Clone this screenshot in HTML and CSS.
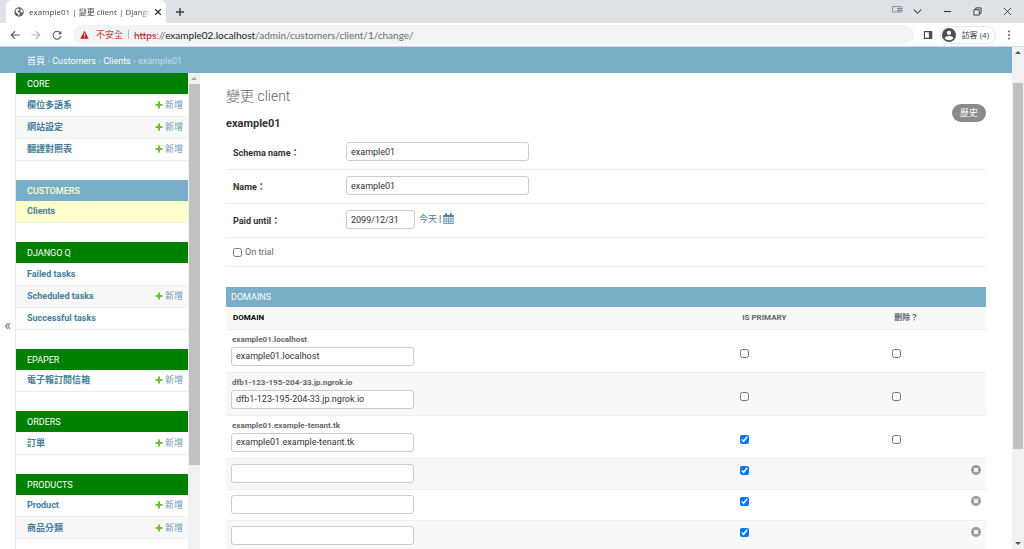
FILE: index.html
```
<!DOCTYPE html>
<html lang="zh-Hant">
<head>
    <meta charset="UTF-8">
    <meta name="viewport" content="width=device-width, initial-scale=1.0">
    <title>example01 | 變更 client | Django</title>
    <link rel="stylesheet" href="styles.css">
</head>
<body>
    <svg class="sprite" aria-hidden="true">
        <symbol id="icon-plus" viewBox="0 0 14 14"><path d="M5.200 1h3.600v4.200H13v3.600H8.800V13H5.200V8.800H1V5.200h4.200z" fill="#70bf2b"/></symbol>
        <symbol id="icon-remove" viewBox="0 0 14 14"><circle cx="7" cy="7" r="7" fill="#999"/><path d="M4.300 4.300l5.400 5.400M9.700 4.300l-5.400 5.400" stroke="#fff" stroke-width="2.600"/></symbol>
    </svg>

    <!-- Browser window -->
    <div class="tab-strip">
        <div class="tab">
            <svg class="tab-icon" viewBox="0 0 20 20"><circle cx="10" cy="10" r="9.500" fill="#5f6368"/><path d="M3 6l4-3 4 1-1 3-3 1 1 2 3 1 1 3-3 4-1-4-4-3zM13 3l3 2 2 5-3 1-3-3 2-2z" fill="#fff"/></svg>
            <span class="tab-title">example01 | 變更 client | Django</span>
            <button class="icon-btn tab-close" aria-label="Close tab"><svg viewBox="0 0 10 10"><path d="M1.500 1.500l7 7M8.500 1.500l-7 7" stroke="#333" stroke-width="1.600"/></svg></button>
        </div>
        <button class="icon-btn new-tab" aria-label="New tab"><svg viewBox="0 0 10 10"><path d="M5 1v8M1 5h8" stroke="#3c4043" stroke-width="1.400"/></svg></button>
        <div class="window-buttons">
            <svg class="screen-icon" viewBox="0 0 22 14" fill="none" stroke="#77777f"><rect x="1" y="1" width="19" height="11" rx="1" stroke-width="1.500"/><path d="M10 5h10M10 9h10M14 3v8" stroke-width="1.800"/></svg>
            <button class="icon-btn" aria-label="Tab search"><svg viewBox="0 0 10 10"><path d="M1 3l4 4 4-4" fill="none" stroke="#444" stroke-width="1.200"/></svg></button>
            <button class="icon-btn" aria-label="Minimize"><svg viewBox="0 0 10 10"><path d="M1 5h8" stroke="#333" stroke-width="1.200"/></svg></button>
            <button class="icon-btn" aria-label="Restore"><svg viewBox="0 0 10 10"><path d="M1 3h6v6H1zM3 3V1h6v6H7" fill="none" stroke="#333"/></svg></button>
            <button class="icon-btn" aria-label="Close"><svg viewBox="0 0 10 10"><path d="M1 1l8 8M9 1l-8 8" stroke="#333"/></svg></button>
        </div>
    </div>
    <div class="toolbar">
        <button class="icon-btn" aria-label="Back"><svg viewBox="0 0 12 12"><path d="M11.500 6H1.500M6 1.500L1.500 6 6 10.500" fill="none" stroke="#5f6368" stroke-width="1.400"/></svg></button>
        <button class="icon-btn" aria-label="Forward"><svg viewBox="0 0 12 12"><path d="M.5 6h10M6 1.500L10.500 6 6 10.500" fill="none" stroke="#b4b7ba" stroke-width="1.400"/></svg></button>
        <button class="icon-btn" aria-label="Reload"><svg viewBox="0 0 12 12"><path d="M10.300 4.200A4.700 4.700 0 1 0 10.700 7" fill="none" stroke="#5f6368" stroke-width="1.400"/><path d="M11.300 .8v4.200H7.100z" fill="#5f6368"/></svg></button>
        <div class="address-bar">
            <svg class="warning-icon" viewBox="0 0 12 12"><path d="M6 1l5.700 10.500H.3z" fill="#c5221f"/><path d="M6 4.500v3.300M6 8.800v1.300" stroke="#fff" stroke-width="1.100"/></svg>
            <span class="not-secure">不安全</span>
            <span class="url"><span class="scheme">https</span>://<span class="host">example02.localhost</span>/admin/customers/client/1/change/</span>
        </div>
        <button class="icon-btn side-panel" aria-label="Side panel"><svg viewBox="0 0 12 12"><path d="M1.700 2h8.600v8H1.700z" fill="none" stroke="#4c5054" stroke-width="1.400"/><path d="M7 2h4v8H7z" fill="#4c5054"/></svg></button>
        <button class="guest">
            <svg viewBox="0 0 16 16"><circle cx="8" cy="8" r="8" fill="#4c5054"/><circle cx="8" cy="5.500" r="2.500" fill="#fff"/><path d="M3 11.800c1-3.400 9-3.400 10 0-2 3-8 3-10 0z" fill="#fff"/></svg>
            <span>訪客 (4)</span>
        </button>
        <button class="icon-btn menu" aria-label="Menu"><svg viewBox="0 0 12 12" fill="#5f6368"><circle cx="6" cy="1.900" r="1.200"/><circle cx="6" cy="6" r="1.200"/><circle cx="6" cy="10.100" r="1.200"/></svg></button>
    </div>

    <!-- Admin site -->
    <div class="viewport">
        <div class="page">
            <nav class="breadcrumbs">
                <a href="#">首頁</a> › <a href="#">Customers</a> › <a href="#">Clients</a> › example01
            </nav>
            <div class="columns">
                <button class="toggle-nav" aria-label="Toggle navigation">«</button>
                <nav class="sidebar">
                    <table>
                        <caption><a href="#">CORE</a></caption>
                        <tr><th><a href="#">欄位多語系</a></th><td><a href="#"><svg><use href="#icon-plus"/></svg>新增</a></td></tr>
                        <tr><th><a href="#">網站設定</a></th><td><a href="#"><svg><use href="#icon-plus"/></svg>新增</a></td></tr>
                        <tr><th><a href="#">翻譯對照表</a></th><td><a href="#"><svg><use href="#icon-plus"/></svg>新增</a></td></tr>
                    </table>
                    <table class="current-app">
                        <caption><a href="#">CUSTOMERS</a></caption>
                        <tr class="current-model"><th><a href="#">Clients</a></th><td></td></tr>
                    </table>
                    <table>
                        <caption><a href="#">DJANGO Q</a></caption>
                        <tr><th><a href="#">Failed tasks</a></th><td></td></tr>
                        <tr><th><a href="#">Scheduled tasks</a></th><td><a href="#"><svg><use href="#icon-plus"/></svg>新增</a></td></tr>
                        <tr><th><a href="#">Successful tasks</a></th><td></td></tr>
                    </table>
                    <table>
                        <caption><a href="#">EPAPER</a></caption>
                        <tr><th><a href="#">電子報訂閱信箱</a></th><td><a href="#"><svg><use href="#icon-plus"/></svg>新增</a></td></tr>
                    </table>
                    <table>
                        <caption><a href="#">ORDERS</a></caption>
                        <tr><th><a href="#">訂單</a></th><td><a href="#"><svg><use href="#icon-plus"/></svg>新增</a></td></tr>
                    </table>
                    <table>
                        <caption><a href="#">PRODUCTS</a></caption>
                        <tr><th><a href="#">Product</a></th><td><a href="#"><svg><use href="#icon-plus"/></svg>新增</a></td></tr>
                        <tr><th><a href="#">商品分類</a></th><td><a href="#"><svg><use href="#icon-plus"/></svg>新增</a></td></tr>
                    </table>
                </nav>
                <div class="scrollbar nav-scrollbar">
                    <span class="arrow up"></span>
                    <span class="thumb"></span>
                </div>
                <main>
                    <h1>變更 client</h1>
                    <div class="object-bar">
                        <h2>example01</h2>
                        <a class="history" href="#">歷史</a>
                    </div>
                    <form>
                        <div class="form-row">
                            <label for="schema-name">Schema name：</label>
                            <input type="text" id="schema-name" value="example01">
                        </div>
                        <div class="form-row">
                            <label for="name">Name：</label>
                            <input type="text" id="name" value="example01">
                        </div>
                        <div class="form-row">
                            <label for="paid-until">Paid until：</label>
                            <input type="text" id="paid-until" class="date" value="2099/12/31">
                            <span class="shortcuts"><a href="#">今天</a> | <a href="#" aria-label="Calendar"><svg viewBox="0 0 14 14"><path d="M1 3h12v10.500H1z" fill="#fff" stroke="#447e9b"/><path d="M.5 2.500h13V5H.5z" fill="#447e9b"/><path d="M4 0v4M10 0v4" stroke="#447e9b" stroke-width="2"/><path d="M4 5v8M7 5v8M10 5v8M1 7.700h12M1 10.500h12" stroke="#447e9b" stroke-width=".8"/></svg></a></span>
                        </div>
                        <div class="form-row checkbox-row">
                            <input type="checkbox" id="on-trial">
                            <label for="on-trial">On trial</label>
                        </div>

                        <h3>DOMAINS</h3>
                        <table class="domains">
                            <thead>
                                <tr><th class="domain required">DOMAIN</th><th class="primary">IS PRIMARY</th><th class="delete">刪除？</th></tr>
                            </thead>
                            <tbody>
                                <tr class="original">
                                    <td><p>example01.localhost</p><input type="text" aria-label="Domain" value="example01.localhost"></td>
                                    <td><input type="checkbox" aria-label="Is primary"></td>
                                    <td><input type="checkbox" aria-label="刪除"></td>
                                </tr>
                                <tr class="original">
                                    <td><p>dfb1-123-195-204-33.jp.ngrok.io</p><input type="text" aria-label="Domain" value="dfb1-123-195-204-33.jp.ngrok.io"></td>
                                    <td><input type="checkbox" aria-label="Is primary"></td>
                                    <td><input type="checkbox" aria-label="刪除"></td>
                                </tr>
                                <tr class="original">
                                    <td><p>example01.example-tenant.tk</p><input type="text" aria-label="Domain" value="example01.example-tenant.tk"></td>
                                    <td><input type="checkbox" aria-label="Is primary" checked></td>
                                    <td><input type="checkbox" aria-label="刪除"></td>
                                </tr>
                                <tr>
                                    <td><input type="text" aria-label="Domain"></td>
                                    <td><input type="checkbox" aria-label="Is primary" checked></td>
                                    <td><button type="button" class="remove" aria-label="Remove"><svg><use href="#icon-remove"/></svg></button></td>
                                </tr>
                                <tr>
                                    <td><input type="text" aria-label="Domain"></td>
                                    <td><input type="checkbox" aria-label="Is primary" checked></td>
                                    <td><button type="button" class="remove" aria-label="Remove"><svg><use href="#icon-remove"/></svg></button></td>
                                </tr>
                                <tr>
                                    <td><input type="text" aria-label="Domain"></td>
                                    <td><input type="checkbox" aria-label="Is primary" checked></td>
                                    <td><button type="button" class="remove" aria-label="Remove"><svg><use href="#icon-remove"/></svg></button></td>
                                </tr>
                            </tbody>
                        </table>
                    </form>
                </main>
            </div>
        </div>
        <div class="scrollbar page-scrollbar">
            <span class="arrow up"></span>
            <span class="thumb"></span>
            <span class="arrow down"></span>
        </div>
    </div>
</body>
</html>
```

FILE: styles.css
```
* {
    box-sizing: border-box;
}
body {
    display: flex;
    flex-direction: column;
    height: 100vh;
    margin: 0;
    overflow: hidden;
    background: #fff;
    color: #333;
    font-family: Roboto, "Noto Sans CJK TC", sans-serif;
    font-size: 9px;
    line-height: 12px;
}
a {
    color: #447e9b;
    text-decoration: none;
}
button {
    padding: 0;
    border: none;
    background: none;
    font: inherit;
    cursor: pointer;
}
svg {
    display: block;
    flex: none;
}
.sprite {
    display: none;
}

/* Browser window */
.tab-strip,
.toolbar {
    display: flex;
    flex: none;
    align-items: center;
    font-family: "Open Sans", "Noto Sans CJK TC", sans-serif;
}
.tab-strip {
    height: 23px;
    padding-left: 6px;
    background: #dee1e6;
}
.tab {
    display: flex;
    align-items: center;
    align-self: flex-end;
    width: 160px;
    height: 23px;
    padding: 0 7px 0 8px;
    border-radius: 6px 6px 0 0;
    background: #fff;
}
.tab-icon {
    width: 10px;
    height: 10px;
    margin-right: 5px;
}
.tab-title {
    flex: 1;
    white-space: nowrap;
    color: #45494d;
    font-size: 8px;
    mask-image: linear-gradient(to right, #000 90%, transparent);
}
.icon-btn svg {
    width: 10px;
    height: 10px;
}
.tab-close {
    margin-left: 2px;
}
.tab .tab-close svg {
    width: 8px;
    height: 8px;
}
.new-tab {
    margin-left: 9px;
}
.window-buttons {
    display: flex;
    align-items: center;
    gap: 21px;
    margin-left: auto;
    padding-right: 12px;
}
.window-buttons svg {
    width: 9px;
    height: 9px;
}
.window-buttons .screen-icon {
    width: 11px;
    height: 7px;
    margin: 0 -11px 4px 0;
}
.toolbar {
    height: 24px;
    padding: 0 10px;
    border-bottom: 1px solid #d5d8dc;
}
.toolbar .icon-btn {
    margin-right: 11px;
}
.address-bar {
    display: flex;
    flex: 1;
    align-items: center;
    height: 19px;
    padding-left: 7px;
    border-radius: 10px;
    background: #f1f3f4;
    white-space: nowrap;
}
.warning-icon {
    width: 9px;
    height: 9px;
    margin-right: 7px;
}
.not-secure {
    margin-right: 5px;
    padding-right: 5px;
    border-right: 1px solid #bbb;
    color: #d0473f;
    line-height: 9px;
}
.url {
    color: #6b6f73;
    font-family: Lato, sans-serif;
    font-size: 10px;
}
.scheme {
    color: #c5221f;
    text-decoration: line-through rgba(197, 34, 31, 0.4);
}
.host {
    color: #202124;
}
.toolbar .side-panel {
    margin: 0 7px 0 9px;
}
.guest {
    display: flex;
    align-items: center;
    gap: 6px;
    height: 18px;
    padding: 0 6px 0 1px;
    border: 1px solid #e4e6e8;
    border-radius: 9px;
    color: #3c4043;
    font-size: 8px;
}
.guest svg {
    width: 14px;
    height: 14px;
}
.toolbar .menu {
    margin: 0 0 0 8px;
}

/* Scrollbars */
.viewport {
    display: flex;
    flex: 1;
    min-height: 0;
}
.scrollbar {
    display: flex;
    flex: none;
    flex-direction: column;
    width: 12px;
    background: #f1f1f1;
}
.arrow {
    width: 6px;
    margin: 4px auto;
    border: 3px solid transparent;
    border-top: none;
    border-bottom-color: #505050;
}
.arrow.down {
    margin-top: auto;
    border-top: 3px solid #505050;
    border-bottom: none;
}
.thumb {
    margin: 0 1px;
    background: #c1c1c1;
}
.page-scrollbar .thumb {
    height: 73%;
    margin-top: 25px;
}
.nav-scrollbar .thumb {
    height: 80%;
    margin-right: 0;
}
.nav-scrollbar .arrow {
    border-bottom-color: #a3a3a3;
}

/* Page */
.page {
    display: flex;
    flex: 1;
    flex-direction: column;
    min-width: 0;
}
.breadcrumbs {
    flex: none;
    padding: 8px 27px 6px;
    background: #79aec8;
    color: #c4dce8;
}
.breadcrumbs a {
    color: #fff;
}
.columns {
    display: flex;
    flex: 1;
    min-height: 0;
}
.toggle-nav {
    flex: none;
    width: 16px;
    padding-top: 28px;
    border-right: 1px solid #eaeaea;
    color: #447e9b;
    font-size: 14px;
}

/* Sidebar */
.sidebar {
    flex: none;
    width: 172px;
    overflow: hidden;
}
.sidebar table {
    width: 100%;
    margin-bottom: 19px;
    border-collapse: collapse;
}
.sidebar caption {
    height: 21px;
    padding: 5px 11px;
    background: #008000;
    line-height: 12px;
    text-align: left;
}
.sidebar caption a {
    color: #fff;
}
.sidebar tr:nth-child(even) {
    background: #f8f8f8;
}
.sidebar th,
.sidebar td {
    height: 22px;
    padding: 0 5px 0 11px;
    border-bottom: 1px solid #eee;
    text-align: left;
}
.sidebar td a {
    display: flex;
    align-items: center;
    justify-content: flex-end;
    gap: 2px;
    color: #6d9bb2;
}
.sidebar td svg {
    width: 8px;
    height: 8px;
}
.sidebar .current-app caption {
    background: #79aec8;
    font-weight: 500;
}
.sidebar .current-app caption a {
    color: #ffffcc;
}
.sidebar .current-model {
    background: #ffffcc;
}

/* Change form */
main {
    flex: 1;
    min-width: 0;
    padding: 15px 26px 0 26px;
    overflow: hidden;
}
h1 {
    margin: 0;
    color: #666;
    font-size: 14px;
    font-weight: 300;
    line-height: 16px;
}
h2 {
    margin: 14px 0 0;
    font-size: 11px;
    line-height: 12px;
}
.object-bar {
    display: flex;
    align-items: flex-start;
    justify-content: space-between;
    height: 32px;
}
.history {
    padding: 3px 8px;
    border-radius: 9px;
    background: #8a8a8a;
    color: #fff;
}
.form-row {
    display: flex;
    align-items: flex-start;
    height: 34px;
    padding: 6px 7px 0;
    border-bottom: 1px solid #eee;
}
.form-row label {
    width: 113px;
    padding-top: 5px;
    font-weight: bold;
}
input[type="text"] {
    display: block;
    width: 183px;
    height: 19px;
    margin: 0;
    padding: 0 4px;
    border: 1px solid #ccc;
    border-radius: 3px;
    background: #fff;
    color: #333;
    font-family: inherit;
    font-size: 9px;
}
.form-row .date {
    width: 69px;
}
.shortcuts {
    display: flex;
    gap: 2px;
    padding: 3px 4px;
    white-space: nowrap;
}
.shortcuts svg {
    width: 11px;
    height: 11px;
}
input[type="checkbox"] {
    display: block;
    width: 9px;
    height: 9px;
    margin: 0;
}
.checkbox-row {
    align-items: center;
    height: 29px;
    padding-top: 0;
}
.form-row.checkbox-row label {
    width: auto;
    padding: 0 0 0 3px;
    color: #666;
    font-weight: normal;
}

/* Domains inline */
h3 {
    margin: 20px 0 0;
    padding: 4px 5px;
    background: #79aec8;
    color: #fff;
    font-size: 9px;
    font-weight: normal;
    line-height: 12px;
}
.domains {
    width: 100%;
    border-collapse: collapse;
    table-layout: fixed;
}
.domains thead,
.domains tbody tr:nth-child(even) {
    background: #f8f8f8;
}
.domains th {
    height: 22px;
    padding: 0 7px;
    border-bottom: 1px solid #eee;
    color: #666;
    font-size: 8px;
    text-align: left;
}
.domains .required {
    color: #000;
}
.domains .domain {
    width: 67%;
}
.domains .primary {
    width: 20%;
}
.domains td {
    height: 31px;
    padding: 5px 5px 6px;
    border-bottom: 1px solid #eee;
    vertical-align: top;
}
.domains .original td {
    height: 43px;
}
/* the object name is cut just below the baseline */
.domains td p {
    height: 8px;
    margin: 0 0 4px;
    padding-left: 1px;
    overflow: hidden;
    color: #666;
    font-size: 8px;
    font-weight: bold;
    line-height: 10px;
}
.domains td input[type="checkbox"] {
    margin-top: 2px;
}
.domains .original td input[type="checkbox"] {
    margin-top: 14px;
}
.remove {
    display: block;
    margin: 1px 0 0 auto;
}
.remove svg {
    width: 10px;
    height: 10px;
}
```
